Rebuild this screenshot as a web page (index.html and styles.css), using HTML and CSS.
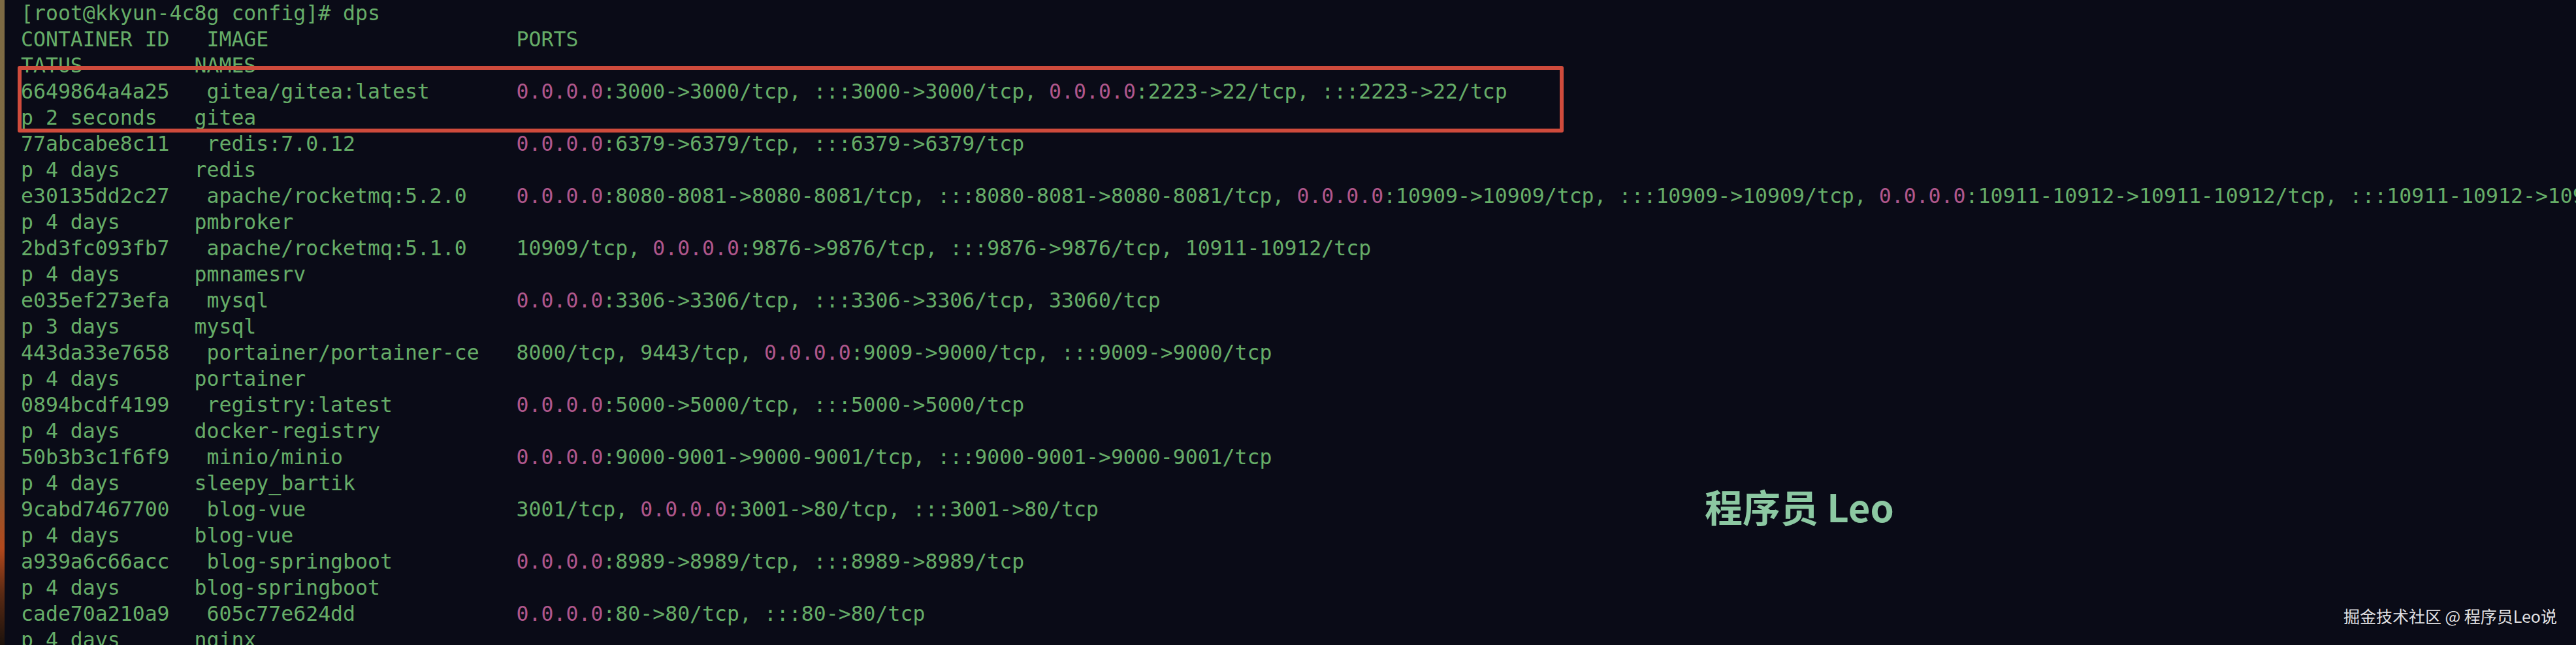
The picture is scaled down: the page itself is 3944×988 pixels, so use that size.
FILE: index.html
```html
<!DOCTYPE html>
<html lang="zh-CN">
<head>
<meta charset="utf-8">
<title>dps</title>
<link rel="stylesheet" href="styles.css">
</head>
<body>
<div class="screen">
  <div class="wallpaper"></div>
  <div class="terminal">
<pre class="output">[root@kkyun-4c8g config]# dps
CONTAINER ID   IMAGE                    PORTS
TATUS         NAMES
6649864a4a25   gitea/gitea:latest       <span class="ip">0.0.0.0</span>:3000-&gt;3000/tcp, :::3000-&gt;3000/tcp, <span class="ip">0.0.0.0</span>:2223-&gt;22/tcp, :::2223-&gt;22/tcp
p 2 seconds   gitea
77abcabe8c11   redis:7.0.12             <span class="ip">0.0.0.0</span>:6379-&gt;6379/tcp, :::6379-&gt;6379/tcp
p 4 days      redis
e30135dd2c27   apache/rocketmq:5.2.0    <span class="ip">0.0.0.0</span>:8080-8081-&gt;8080-8081/tcp, :::8080-8081-&gt;8080-8081/tcp, <span class="ip">0.0.0.0</span>:10909-&gt;10909/tcp, :::10909-&gt;10909/tcp, <span class="ip">0.0.0.0</span>:10911-10912-&gt;10911-10912/tcp, :::10911-10912-&gt;10911-10912/tcp
p 4 days      pmbroker
2bd3fc093fb7   apache/rocketmq:5.1.0    10909/tcp, <span class="ip">0.0.0.0</span>:9876-&gt;9876/tcp, :::9876-&gt;9876/tcp, 10911-10912/tcp
p 4 days      pmnamesrv
e035ef273efa   mysql                    <span class="ip">0.0.0.0</span>:3306-&gt;3306/tcp, :::3306-&gt;3306/tcp, 33060/tcp
p 3 days      mysql
443da33e7658   portainer/portainer-ce   8000/tcp, 9443/tcp, <span class="ip">0.0.0.0</span>:9009-&gt;9000/tcp, :::9009-&gt;9000/tcp
p 4 days      portainer
0894bcdf4199   registry:latest          <span class="ip">0.0.0.0</span>:5000-&gt;5000/tcp, :::5000-&gt;5000/tcp
p 4 days      docker-registry
50b3b3c1f6f9   minio/minio              <span class="ip">0.0.0.0</span>:9000-9001-&gt;9000-9001/tcp, :::9000-9001-&gt;9000-9001/tcp
p 4 days      sleepy_bartik
9cabd7467700   blog-vue                 3001/tcp, <span class="ip">0.0.0.0</span>:3001-&gt;80/tcp, :::3001-&gt;80/tcp
p 4 days      blog-vue
a939a6c66acc   blog-springboot          <span class="ip">0.0.0.0</span>:8989-&gt;8989/tcp, :::8989-&gt;8989/tcp
p 4 days      blog-springboot
cade70a210a9   605c77e624dd             <span class="ip">0.0.0.0</span>:80-&gt;80/tcp, :::80-&gt;80/tcp
p 4 days      nginx</pre>
    <div class="highlight"></div>
    <div class="watermark">程序员 Leo</div>
    <div class="credit">掘金技术社区 @ 程序员Leo说</div>
  </div>
</div>
</body>
</html>
```

FILE: styles.css
```css
html, body {
  margin: 0;
  padding: 0;
  background: #0a0b17;
  overflow: hidden;
}

.screen {
  display: flex;
  width: 3944px;
  height: 988px;
  overflow: hidden;
}

.wallpaper {
  flex: 0 0 7px;
  background: linear-gradient(to bottom, #7d6a44 0%, #806b42 55%, #8a5a30 75%, #b2481c 85%, #5a2a14 92%, #1c120c 100%);
}

.terminal {
  position: relative;
  flex: 1 1 auto;
  background: #0a0b17;
  padding-left: 25px;
  overflow: hidden;
}

.output {
  margin: 0;
  font-family: "DejaVu Sans Mono", "Liberation Mono", monospace;
  font-size: 31.5px;
  line-height: 40px;
  color: #66ad68;
  white-space: pre;
}

.ip {
  color: #b0578c;
}

.highlight {
  position: absolute;
  left: 20px;
  top: 101px;
  width: 2367px;
  height: 102px;
  box-sizing: border-box;
  border: 6px solid #cf4b3c;
  border-radius: 3px;
}

.watermark {
  position: absolute;
  left: 2603px;
  top: 746px;
  font-family: "Noto Sans CJK SC", "Noto Sans", sans-serif;
  font-weight: 700;
  font-size: 58px;
  line-height: 1;
  color: #8cc8a2;
  white-space: nowrap;
}

.credit {
  position: absolute;
  right: 29px;
  top: 931px;
  font-family: "Noto Sans CJK SC", "Noto Sans", sans-serif;
  font-size: 25px;
  line-height: 1;
  color: #e2e2e6;
  white-space: nowrap;
  text-shadow: 0 0 2px rgba(0, 0, 0, 0.6);
}
```
